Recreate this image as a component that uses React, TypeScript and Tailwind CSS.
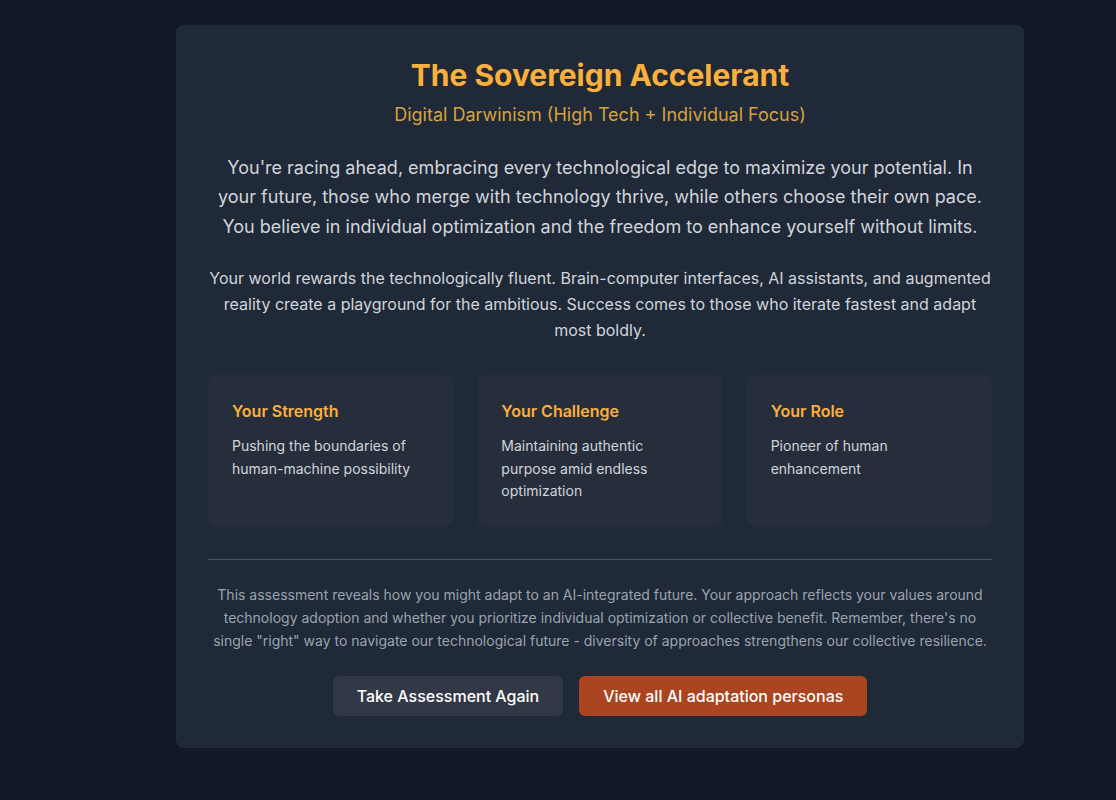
const traits = [
  { title: "Your Strength", text: "Pushing the boundaries of human-machine possibility" },
  { title: "Your Challenge", text: "Maintaining authentic purpose amid endless optimization" },
  { title: "Your Role", text: "Pioneer of human enhancement" },
]

export default function App() {
  return (
    <div className="min-h-screen bg-[#111827] pt-[25px] pb-12" style={{ fontFamily: "Inter, 'Noto Sans', sans-serif" }}>
      <div className="ml-[176px] w-[848px] rounded-lg bg-[#1f2937] px-8 py-8">
        {/* Header */}
        <div className="text-center">
          <h1 className="text-3xl font-bold text-[#fbb03b]">The Sovereign Accelerant</h1>
          <p className="mt-2 text-lg leading-7 text-[#d6a23f]">Digital Darwinism (High Tech + Individual Focus)</p>
        </div>

        <p className="mx-auto mt-6 max-w-3xl text-center text-lg leading-relaxed text-[#d1d5db]">
          You're racing ahead, embracing every technological edge to maximize your potential. In your future, those who
          merge with technology thrive, while others choose their own pace. You believe in individual optimization and
          the freedom to enhance yourself without limits.
        </p>

        <p className="mt-6 text-center text-base leading-relaxed text-[#d1d5db]">
          Your world rewards the technologically fluent. Brain-computer interfaces, AI assistants, and augmented reality
          create a playground for the ambitious. Success comes to those who iterate fastest and adapt most boldly.
        </p>

        {/* Traits */}
        <div className="mt-8 grid grid-cols-3 gap-6">
          {traits.map((t) => (
            <div key={t.title} className="rounded-lg bg-[#272e3b] p-6">
              <h3 className="text-base font-semibold text-[#fbb03b]">{t.title}</h3>
              <p className="mt-3 text-sm leading-relaxed text-[#d1d5db]">{t.text}</p>
            </div>
          ))}
        </div>

        {/* Footer */}
        <div className="mt-8 border-t border-[#4b5563] pt-6">
          <p className="text-center text-sm leading-relaxed text-[#9ca3af]">
            This assessment reveals how you might adapt to an AI-integrated future. Your approach reflects your values
            around technology adoption and whether you prioritize individual optimization or collective benefit.
            Remember, there's no single "right" way to navigate our technological future - diversity of approaches
            strengthens our collective resilience.
          </p>
          <div className="mt-6 flex justify-center gap-4">
            <button className="rounded-md bg-[#323846] px-6 py-2 text-base font-medium text-white">
              Take Assessment Again
            </button>
            <button className="rounded-md bg-[#ab4420] px-6 py-2 text-base font-medium text-white">
              View all AI adaptation personas
            </button>
          </div>
        </div>
      </div>
    </div>
  )
}
